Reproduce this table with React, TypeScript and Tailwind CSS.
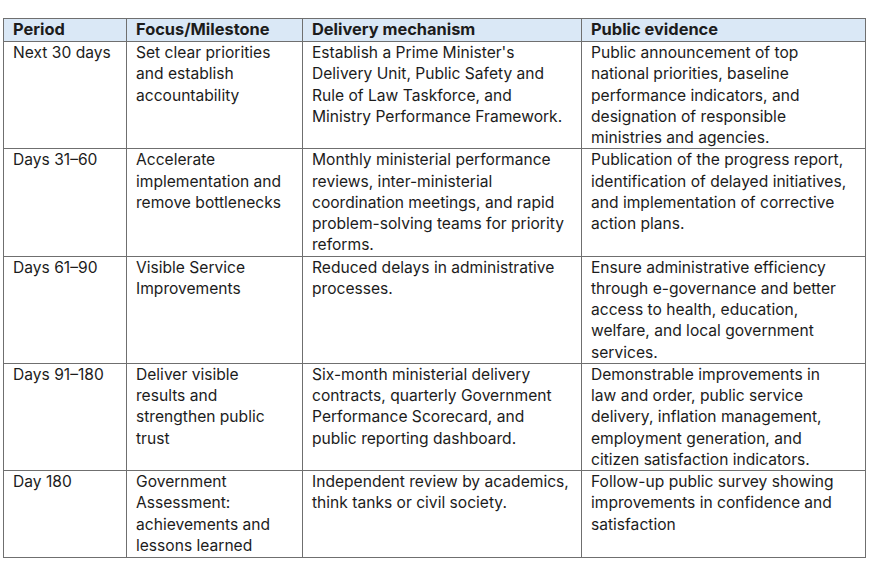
const rows: { h: string; cells: string[][] }[] = [
  {
    h: "h-[106px]",
    cells: [
      ["Next 30 days"],
      ["Set clear priorities", "and establish", "accountability"],
      [
        "Establish a Prime Minister's",
        "Delivery Unit, Public Safety and",
        "Rule of Law Taskforce, and",
        "Ministry Performance Framework.",
      ],
      [
        "Public announcement of top",
        "national priorities, baseline",
        "performance indicators, and",
        "designation of responsible",
        "ministries and agencies.",
      ],
    ],
  },
  {
    h: "h-[107px]",
    cells: [
      ["Days 31–60"],
      ["Accelerate", "implementation and", "remove bottlenecks"],
      [
        "Monthly ministerial performance",
        "reviews, inter-ministerial",
        "coordination meetings, and rapid",
        "problem-solving teams for priority",
        "reforms.",
      ],
      [
        "Publication of the progress report,",
        "identification of delayed initiatives,",
        "and implementation of corrective",
        "action plans.",
      ],
    ],
  },
  {
    h: "h-[107px]",
    cells: [
      ["Days 61–90"],
      ["Visible Service", "Improvements"],
      ["Reduced delays in administrative", "processes."],
      [
        "Ensure administrative efficiency",
        "through e-governance and better",
        "access to health, education,",
        "welfare, and local government",
        "services.",
      ],
    ],
  },
  {
    h: "h-[106px]",
    cells: [
      ["Days 91–180"],
      ["Deliver visible", "results and", "strengthen public", "trust"],
      [
        "Six-month ministerial delivery",
        "contracts, quarterly Government",
        "Performance Scorecard, and",
        "public reporting dashboard.",
      ],
      [
        "Demonstrable improvements in",
        "law and order, public service",
        "delivery, inflation management,",
        "employment generation, and",
        "citizen satisfaction indicators.",
      ],
    ],
  },
  {
    h: "h-[87px]",
    cells: [
      ["Day 180"],
      ["Government", "Assessment:", "achievements and", "lessons learned"],
      ["Independent review by academics,", "think tanks or civil society."],
      [
        "Follow-up public survey showing",
        "improvements in confidence and",
        "satisfaction",
      ],
    ],
  },
];

const headers = ["Period", "Focus/Milestone", "Delivery mechanism", "Public evidence"];

export default function App() {
  return (
    <div
      className="w-[870px] h-[565px] bg-white pt-[18px] pl-[3px] text-[#1c1c1c] text-[15.6px] leading-[21.25px]"
      style={{ fontFamily: "Inter, 'Open Sans', sans-serif" }}
    >
      <table className="border-collapse table-fixed w-[862px]">
        <colgroup>
          <col className="w-[123px]" />
          <col className="w-[176px]" />
          <col className="w-[279px]" />
          <col className="w-[284px]" />
        </colgroup>
        <thead>
          <tr className="h-[23px] bg-[#dae8f6]">
            {headers.map((h) => (
              <th
                key={h}
                className="border border-[#6f6f6f] px-[9px] py-0 text-left text-[16.4px] font-bold align-middle"
              >
                {h}
              </th>
            ))}
          </tr>
        </thead>
        <tbody>
          {rows.map((r, i) => (
            <tr key={i} className={r.h}>
              {r.cells.map((lines, j) => (
                <td
                  key={j}
                  className="border border-[#6f6f6f] px-[9px] py-0 align-top whitespace-nowrap"
                >
                  {lines.map((l, k) => (
                    <div key={k}>{l}</div>
                  ))}
                </td>
              ))}
            </tr>
          ))}
        </tbody>
      </table>
    </div>
  );
}
